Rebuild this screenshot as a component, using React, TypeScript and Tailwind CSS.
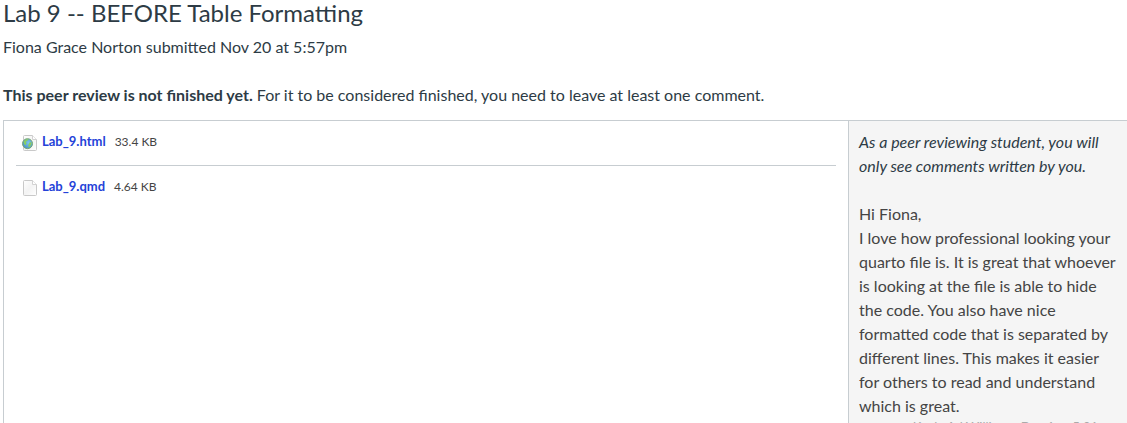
function FileIcon({ web = false }: { web?: boolean }) {
  return (
    <svg width="16" height="16" viewBox="0 0 16 16" className="shrink-0 overflow-visible">
      <defs>
        <linearGradient id="paper" x1="0" y1="0" x2="1" y2="1">
          <stop offset="0" stopColor="#ffffff" />
          <stop offset="0.5" stopColor="#f3f3f3" />
          <stop offset="1" stopColor="#ffffff" />
        </linearGradient>
        <radialGradient id="globe" cx="0.6" cy="0.4" r="0.6">
          <stop offset="0" stopColor="#7cc4f0" />
          <stop offset="1" stopColor="#4d94c4" />
        </radialGradient>
      </defs>
      <path d="M2.5 .5h8l4 4v10q0 1-1 1h-11q-1 0-1-1v-13q0-1 1-1z" fill="url(#paper)" stroke="#c9c9c9" />
      <path d="M10.5 .5v4h4" fill="#fff" stroke="#d2d2d2" />
      {web && (
        <>
          <circle cx="5.5" cy="8.7" r="5" fill="url(#globe)" stroke="#79a873" />
          <path d="M1.7 6.4l2-2 2.6-.4-.8 1.7-1.8 1 .8 1.6-1 2-1.2-1zM7.3 7.8l1.8-.7.5 1.2-1 2.5-1.8 1.7-.6-2z" fill="#8bd05f" />
        </>
      )}
    </svg>
  );
}

export default function App() {
  return (
    <div className="h-[423px] w-[1127px] overflow-hidden bg-white pl-[3px] font-['Lato',sans-serif] text-[16px] leading-6 text-[#2d3b45]">
      <h1 className="h-[35px] text-[24px] leading-[25px]">Lab 9 -- BEFORE Table Formatting</h1>
      <p className="h-12">Fiona Grace Norton submitted Nov 20 at 5:57pm</p>
      <p className="h-[37px]">
        <b>This peer review is not finished yet.</b> For it to be considered finished, you need to leave at least one comment.
      </p>
      <div className="flex h-[400px] border-t border-l border-[#c7cdd1]">
        <main className="w-[844px] pr-3 pl-3">
          <div className="flex h-[45px] items-center border-b border-[#c7cdd1] pb-[4px] pl-[6px] text-[12px]">
            <div className="mt-[4px] flex"><FileIcon web /></div>
            <b className="ml-1 text-[13px] text-[#2442d8]">Lab_9.html</b>
            <span className="mt-[2px] ml-[9px] text-[#444]">33.4 KB</span>
          </div>
          <div className="flex h-[45px] items-center pb-[5px] pl-[6px] text-[12px]">
            <div className="mt-[4px] flex"><FileIcon /></div>
            <b className="ml-1 text-[13px] text-[#2442d8]">Lab_9.qmd</b>
            <span className="mt-[2px] ml-[9px] text-[#444]">4.64 KB</span>
          </div>
        </main>
        <aside className="w-[279px] border-l border-[#c7cdd1] bg-[#f5f5f5] pt-[9px] pl-[10px] whitespace-nowrap">
          <p className="italic">As a peer reviewing student, you will<br />only see comments written by you.</p>
          <p className="mt-6 text-[#444]">Hi Fiona,<br />I love how professional looking your<br />quarto file is. It is great that whoever<br />is looking at the file is able to hide<br />the code. You also have nice<br />formatted code that is separated by<br />different lines. This makes it easier<br />for others to read and understand<br />which is great.</p>
          <p className="pr-[11px] text-right text-[13px] leading-[19px] text-[#aaa]">Kayla Ad Williams, Dec 1 at 5:01pm</p>
        </aside>
      </div>
    </div>
  );
}
